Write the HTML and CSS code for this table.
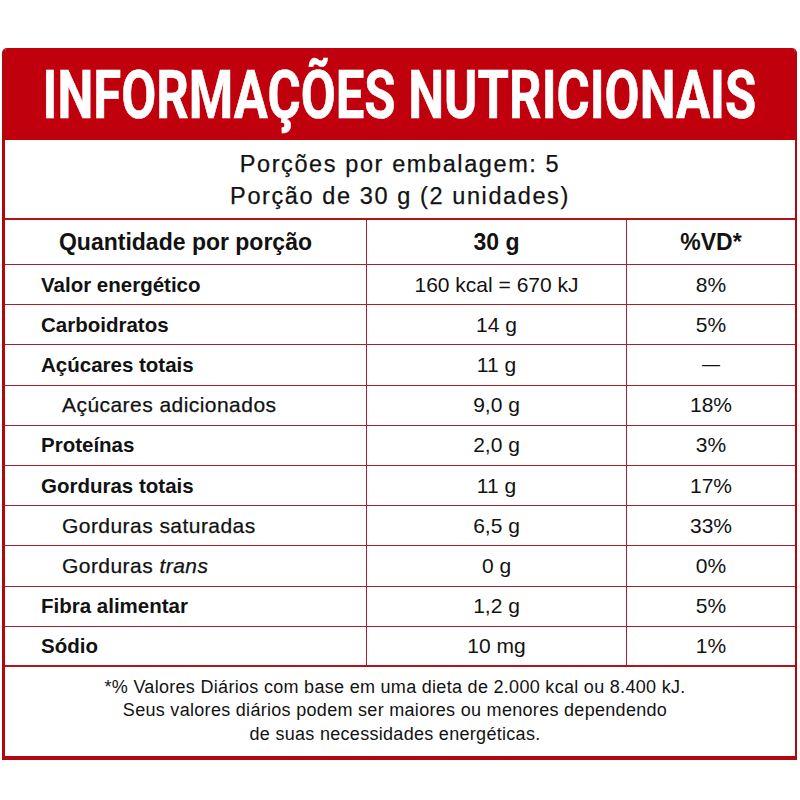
FILE: index.html
```html
<!DOCTYPE html>
<html lang="pt-BR">
<head>
<meta charset="utf-8">
<title>Informações Nutricionais</title>
<link rel="stylesheet" href="styles.css">
</head>
<body>
<div class="card">
  <div class="head"><h1 class="title">INFORMAÇÕES NUTRICIONAIS</h1></div>
  <div class="serv">
    <p>Porções por embalagem: 5</p>
    <p>Porção de 30 g (2 unidades)</p>
  </div>
  <div class="tbl">
    <div class="row hdr"><div class="c lab center"><span>Quantidade por porção</span></div><div class="c val"><span>30 g</span></div><div class="c vd"><span>%VD*</span></div></div>
    <div class="row"><div class="c lab"><span>Valor energético</span></div><div class="c val"><span>160 kcal = 670 kJ</span></div><div class="c vd"><span>8%</span></div></div>
    <div class="row"><div class="c lab"><span>Carboidratos</span></div><div class="c val"><span>14 g</span></div><div class="c vd"><span>5%</span></div></div>
    <div class="row"><div class="c lab"><span>Açúcares totais</span></div><div class="c val"><span>11 g</span></div><div class="c vd"><span class="dash">—</span></div></div>
    <div class="row"><div class="c lab sub"><span>Açúcares adicionados</span></div><div class="c val"><span>9,0 g</span></div><div class="c vd"><span>18%</span></div></div>
    <div class="row"><div class="c lab"><span>Proteínas</span></div><div class="c val"><span>2,0 g</span></div><div class="c vd"><span>3%</span></div></div>
    <div class="row"><div class="c lab"><span>Gorduras totais</span></div><div class="c val"><span>11 g</span></div><div class="c vd"><span>17%</span></div></div>
    <div class="row"><div class="c lab sub"><span>Gorduras saturadas</span></div><div class="c val"><span>6,5 g</span></div><div class="c vd"><span>33%</span></div></div>
    <div class="row"><div class="c lab sub"><span>Gorduras <i>trans</i></span></div><div class="c val"><span>0 g</span></div><div class="c vd"><span>0%</span></div></div>
    <div class="row"><div class="c lab"><span>Fibra alimentar</span></div><div class="c val"><span>1,2 g</span></div><div class="c vd"><span>5%</span></div></div>
    <div class="row last"><div class="c lab"><span>Sódio</span></div><div class="c val"><span>10 mg</span></div><div class="c vd"><span>1%</span></div></div>
  </div>
  <div class="foot">
    <p>*% Valores Diários com base em uma dieta de 2.000 kcal ou 8.400 kJ.</p>
    <p>Seus valores diários podem ser maiores ou menores dependendo</p>
    <p>de suas necessidades energéticas.</p>
  </div>
</div>
</body>
</html>
```

FILE: styles.css
```css
* { box-sizing: border-box; }
html, body { margin: 0; padding: 0; background: #fff; }
body { font-family: "Liberation Sans", Arial, sans-serif; color: #121212; }

.card {
  width: 795px;
  margin: 48px 0 0 2px;
  border-left: 3px solid #b3070f;
  border-right: 2px solid #b3070f;
  border-bottom: 4px solid #b3070f;
  border-radius: 5px 5px 0 0;
  overflow: hidden;
}

.head {
  height: 92px;
  background: #c0000d;
  display: flex;
  align-items: center;
  justify-content: center;
  overflow: hidden;
  margin-left: -3px;
  margin-right: -2px;
}
.title {
  margin: 0;
  font-family: Roboto, "Liberation Sans", sans-serif;
  font-weight: 700;
  font-size: 66px;
  line-height: 1;
  color: #fff;
  white-space: nowrap;
  transform: scaleX(0.77);
  padding-top: 4px;
  -webkit-text-stroke: 0.6px #fff;
}

.serv {
  height: 80px;
  padding-top: 8px;
  border-bottom: 2px solid #b3141b;
  text-align: center;
  font-size: 23.5px;
  letter-spacing: 1.6px;
  -webkit-text-stroke: 0.25px #121212;
}
.serv p { margin: 0; line-height: 32px; }

.row {
  display: grid;
  grid-template-columns: 362px 260px 1fr;
  height: 40.2px;
  border-bottom: 1px solid #a8222a;
}
.row.hdr { height: 45px; }
.row.last { border-bottom: 2px solid #b3141b; }

.c {
  display: flex;
  align-items: center;
  font-size: 21px;
  white-space: nowrap;
}
.c.lab { padding-left: 36px; font-size: 20.5px; font-weight: 700; border-right: 1px solid #a8222a; }
.c.lab.sub { padding-left: 57px; font-size: 21px; font-weight: 400; letter-spacing: 0.45px; -webkit-text-stroke: 0.25px #121212; }
.c.val { justify-content: center; border-right: 1px solid #a8222a; }
.c.vd { justify-content: center; }
.row.hdr .c { font-size: 23px; font-weight: 700; }
.c.lab.center { justify-content: center; padding-left: 0; }
.dash { font-size: 18px; }

.foot {
  height: 89px;
  padding: 9px 10px 0 0;
  text-align: center;
  font-size: 18px;
  letter-spacing: 0.3px;
}
.foot p { margin: 0; line-height: 23.5px; }
```
